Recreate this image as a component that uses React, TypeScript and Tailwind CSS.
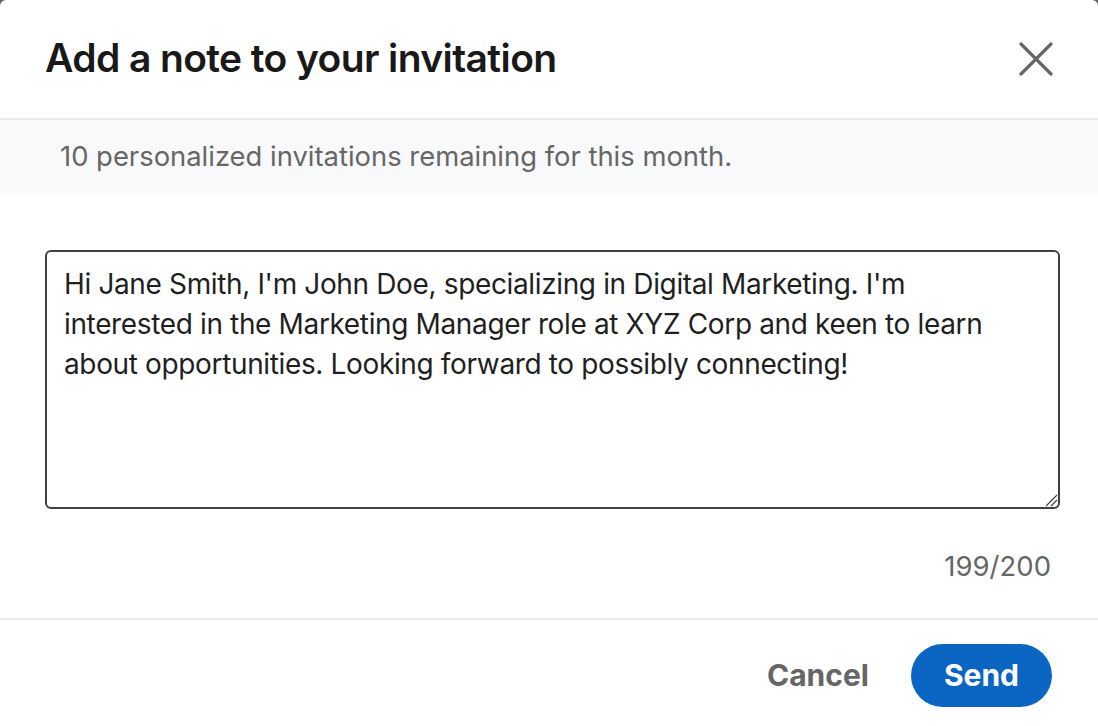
import React from "react";

export default function App() {
  return (
    <div className="w-[1098px] h-[726px] bg-[#5e5e5e] overflow-hidden" style={{ fontFamily: "Inter, 'Noto Sans', sans-serif" }}>
      <div className="w-full h-full bg-white rounded-t-[6px] flex flex-col">
        <div className="h-[120px] flex items-center justify-between pl-[45px] pr-[44px] border-b-2 border-[#e8e8e8]">
          <h2 className="text-[39px] font-semibold text-[#191919] tracking-[-0.6px] pb-[1px]">Add a note to your invitation</h2>
          <button className="w-[36px] h-[36px] flex items-center justify-center text-[#666666]" aria-label="Dismiss">
            <svg width="34" height="34" viewBox="0 0 34 34" fill="none" stroke="currentColor" strokeWidth="3.2" strokeLinecap="round">
              <path d="M2 2 L32 32 M32 2 L2 32" />
            </svg>
          </button>
        </div>
        <div className="h-[73px] bg-[#f8f9fb] flex items-center pl-[60px]">
          <p className="text-[27.4px] text-[#666666]">10 personalized invitations remaining for this month.</p>
        </div>
        <div className="pt-[57px] pl-[45px] pr-[38px]">
          <div className="relative h-[259px] border-2 border-[#404040] rounded-[6px] pl-[17px] pt-[12px] text-[28px] tracking-[-0.36px] leading-[40px] text-[#1f1f1f]">
            <div>Hi Jane Smith, I'm John Doe, specializing in Digital Marketing. I'm</div>
            <div>interested in the Marketing Manager role at XYZ Corp and keen to learn</div>
            <div>about opportunities. Looking forward to possibly connecting!</div>
            <svg className="absolute right-[0px] bottom-[0px]" width="16" height="16" viewBox="0 0 16 16" fill="none" stroke="#404040" strokeWidth="1.2">
              <path d="M4 15 L15 4 M9 15 L15 9" />
            </svg>
          </div>
        </div>
        <div className="flex justify-end pr-[47px] pt-[42px] pb-[37px]">
          <span className="text-[27.5px] text-[#666666] leading-[30px]">199/200</span>
        </div>
        <div className="border-t-2 border-[#e8e8e8] flex-1 flex items-start justify-end gap-[42px] pr-[46px] pt-[24px]">
          <button className="h-[63px] text-[30px] font-bold text-[#666666]">Cancel</button>
          <button className="h-[63px] px-[33px] rounded-full bg-[#0a66c2] text-[30px] font-bold text-white">Send</button>
        </div>
      </div>
    </div>
  );
}
